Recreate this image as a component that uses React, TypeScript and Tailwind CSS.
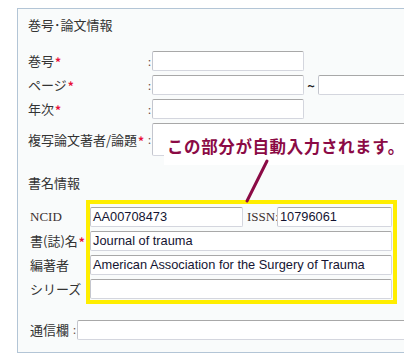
import React from "react";

const jp = { fontFamily: '"Noto Sans CJK JP", "Noto Sans", sans-serif' };
const serif = { fontFamily: '"Liberation Serif", "DejaVu Serif", serif' };
const arial = { fontFamily: '"Liberation Sans", Arial, sans-serif' };

const inputCls =
  "h-[20px] bg-white border border-[#d4d6de] border-t-[#a8a8a8] border-l-[#c4c6ce] rounded-[2px] flex items-center pl-[2px] text-[12.8px] text-[#141432] whitespace-nowrap overflow-hidden";

function Star() {
  return <span className="text-[#e8103a] text-[12px] font-bold relative top-[1px] ml-[1px]">*</span>;
}

function Colon() {
  return <span className="w-[5px] text-[11px] text-[#6b4a3a] leading-none flex justify-center">:</span>;
}

export default function App() {
  return (
    <div className="w-[404px] h-[364px] overflow-hidden bg-white relative" style={jp}>
      <div className="ml-[17px] mt-[8px] w-[420px] border border-[#b3c5d6] border-r-0 bg-[#f9fbfb] text-[#333] text-[13px]">
        <div className="pl-[10px] pt-[7px] leading-[18px]">巻号･論文情報</div>

        <div className="mt-[17px] pl-[10px] flex flex-col gap-[4px]">
          <div className="flex items-center h-[20px]">
            <div className="w-[119px] flex items-center">巻号<Star /></div>
            <Colon />
            <div className={inputCls + " w-[152px]"} />
          </div>
          <div className="flex items-center h-[20px]">
            <div className="w-[119px] flex items-center">ページ<Star /></div>
            <Colon />
            <div className={inputCls + " w-[152px]"} />
            <div className="w-[14px] text-[13px] flex justify-center font-bold text-[#222] relative top-[1px]">~</div>
            <div className={inputCls + " flex-1"} />
          </div>
          <div className="flex items-center h-[20px]">
            <div className="w-[119px] flex items-center">年次<Star /></div>
            <Colon />
            <div className={inputCls + " w-[152px]"} />
          </div>
          <div className="flex items-center h-[33px]">
            <div className="w-[119px] flex items-center">複写論文著者/論題<Star /></div>
            <Colon />
            <div className={inputCls + " flex-1 h-[33px]"} />
          </div>
        </div>

        <div className="pl-[10px] mt-[18px] leading-[18px]">書名情報</div>

        <div className="mt-[8px] pl-[12px] flex">
          <div className="w-[56px] pt-[7px] flex flex-col gap-[4px]">
            <div className="h-[20px] flex items-center text-[13px] text-[#3a3030]" style={serif}>NCID</div>
            <div className="h-[20px] flex items-center">書(誌)名<Star /></div>
            <div className="h-[20px] flex items-center">編著者</div>
            <div className="h-[20px] flex items-center">シリーズ</div>
          </div>
          <div className="w-[311px] border-4 border-[#ffee00] pt-[3px] pb-[1px] pr-[1px] flex flex-col gap-[4px]">
            <div className="flex items-center h-[20px]">
              <div className={inputCls + " w-[153px]"} style={arial}>AA00708473</div>
              <div className="ml-[4px] w-[30px] text-[13px] text-[#3a3030]" style={serif}>ISSN:</div>
              <div className={inputCls + " flex-1"} style={arial}>10796061</div>
            </div>
            <div className={inputCls} style={arial}>Journal of trauma</div>
            <div className={inputCls} style={arial}>American Association for the Surgery of Trauma</div>
            <div className={inputCls} style={arial} />
          </div>
        </div>

        <div className="mt-[16px] pl-[12px] pb-[13px] flex items-center h-[19px] box-content">
          <div className="w-[42px]">通信欄</div>
          <Colon />
          <div className={inputCls + " flex-1 h-[19px]"} />
        </div>
      </div>

      <div className="absolute left-[164px] top-[124px] w-[240px] h-[41px] bg-white pl-[3px] pt-[10px]">
        <span className="text-[16.5px] leading-[20px] font-semibold tracking-[0.6px] text-[#8b0a45] whitespace-nowrap">この部分が自動入力されます。</span>
      </div>
      <svg className="absolute left-0 top-0" width="404" height="364" viewBox="0 0 404 364">
        <line x1="267" y1="161" x2="247" y2="201" stroke="#8b0a45" strokeWidth="3" strokeLinecap="round" />
      </svg>
    </div>
  );
}
